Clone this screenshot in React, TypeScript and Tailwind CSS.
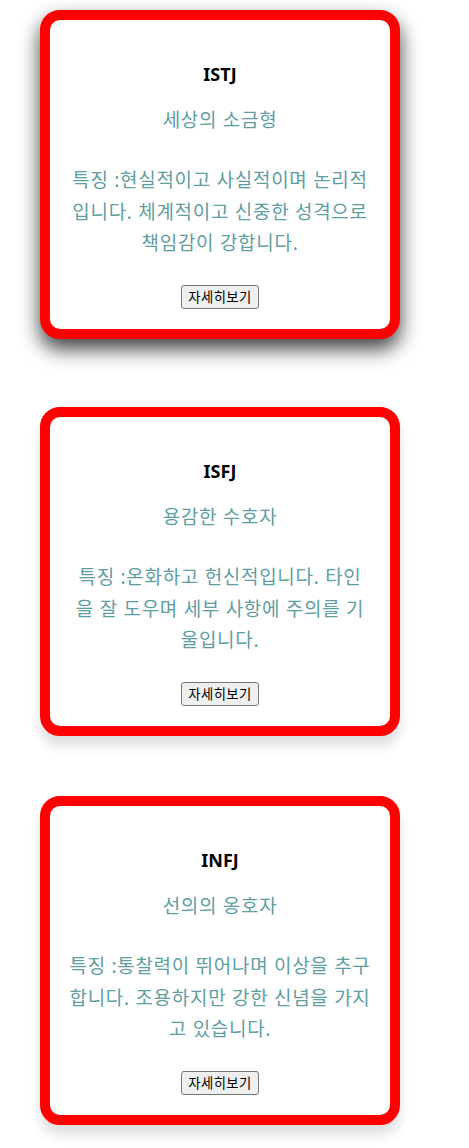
import React from "react";

const cards = [
  {
    code: "ISTJ",
    name: "세상의 소금형",
    lines: ["특징 :현실적이고 사실적이며 논리적", "입니다. 체계적이고 신중한 성격으로", "책임감이 강합니다."],
    hover: true,
  },
  {
    code: "ISFJ",
    name: "용감한 수호자",
    lines: ["특징 :온화하고 헌신적입니다. 타인", "을 잘 도우며 세부 사항에 주의를 기", "울입니다."],
    hover: false,
  },
  {
    code: "INFJ",
    name: "선의의 옹호자",
    lines: ["특징 :통찰력이 뛰어나며 이상을 추구", "합니다. 조용하지만 강한 신념을 가지", "고 있습니다."],
    hover: false,
  },
];

export default function App() {
  return (
    <div
      className="min-h-[1148px] bg-white pt-[18px]"
      style={{ fontFamily: '"Noto Sans", "Noto Sans CJK KR", sans-serif' }}
    >
      <div className="flex flex-col gap-[60px] ml-[40px] w-[360px]">
        {cards.map((c) => (
          <div
            key={c.code}
            className={
              c.hover
                ? "h-[329px] border-[10px] border-[#ff0000] rounded-[20px] bg-white flex flex-col items-center px-[10px] pt-[42px] -translate-y-[8px] shadow-[0_10px_20px_rgba(0,0,0,0.75)]"
                : "h-[329px] border-[10px] border-[#ff0000] rounded-[20px] bg-white flex flex-col items-center px-[10px] pt-[42px] shadow-[0_10px_12px_rgba(0,0,0,0.13)]"
            }
          >
            <div className="text-[18px] font-bold leading-[24px] text-black">{c.code}</div>
            <div className="mt-[21px] text-[19px] tracking-[0.7px] leading-[27px] text-[#5f9ea0]">{c.name}</div>
            <p className="mt-[31px] text-[19px] tracking-[0.7px] leading-[31.5px] text-[#5f9ea0] text-center w-full whitespace-nowrap">
              {c.lines.map((l, i) => (
                <React.Fragment key={i}>
                  {l}
                  {i < c.lines.length - 1 && <br />}
                </React.Fragment>
              ))}
            </p>
            <button
              className="mt-[25px] h-[24px] px-[6px] text-[13.33px] tracking-[0.4px] leading-[20px] text-black bg-[#efefef] border border-[#767676] rounded-[3px]"
              style={{ fontFamily: '"Noto Sans CJK KR", sans-serif' }}
            >
              자세히보기
            </button>
          </div>
        ))}
      </div>
    </div>
  );
}
